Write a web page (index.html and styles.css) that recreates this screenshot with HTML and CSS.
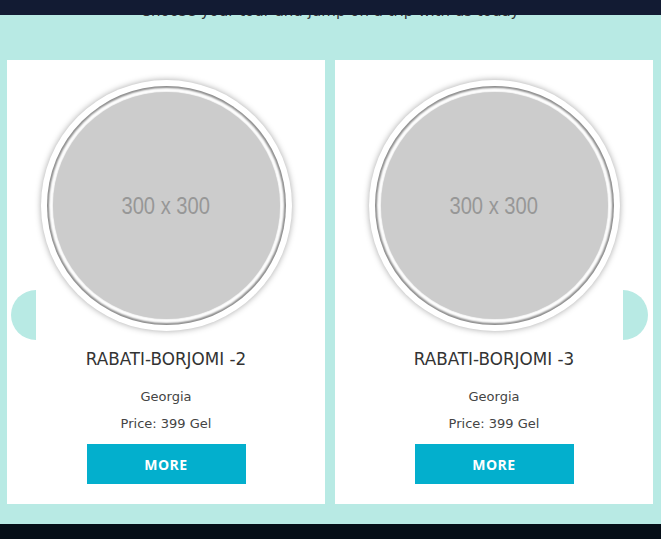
FILE: index.html
```html
<!DOCTYPE html>
<html lang="en">
<head>
  <meta charset="UTF-8" />
  <meta name="viewport" content="width=device-width,initial-scale=1" />
  <title>Tours</title>
  <link rel="stylesheet" href="styles.css">
</head>
<body>
  <!-- Top bar -->
  <header class="topbar"></header>

  <section class="tours">
    <h2 class="tours-title">Choose your tour and jump on a trip with us today</h2>

    <div class="slider">
      <span class="arrow arrow-left"></span>
      <div class="tour-card">
        <div class="thumb"><div class="thumb-ring"><div class="thumb-img"><span>300 x 300</span></div></div></div>
        <h3>RABATI-BORJOMI -2</h3>
        <div class="tour-country">Georgia</div>
        <div class="tour-price">Price: 399 Gel</div>
        <button class="more-btn">MORE</button>
      </div>
      <div class="tour-card">
        <div class="thumb"><div class="thumb-ring"><div class="thumb-img"><span>300 x 300</span></div></div></div>
        <h3>RABATI-BORJOMI -3</h3>
        <div class="tour-country">Georgia</div>
        <div class="tour-price">Price: 399 Gel</div>
        <button class="more-btn">MORE</button>
      </div>
      <span class="arrow arrow-right"></span>
    </div>
  </section>

  <footer class="bottombar"></footer>
</body>
</html>
```

FILE: styles.css
```css
body {margin:0; font-family:'DejaVu Sans', Verdana, sans-serif; background:#b8eae4; color:#333;}
.topbar {position:fixed; top:0; left:0; right:0; height:15px; background:#121b33; z-index:10;}
.tours {padding:0 8px 20px 7px;}
.tours-title {margin:0 0 38px 0; font-size:15px; line-height:22px; font-weight:400; text-align:center; color:#333;}
/* Slider */
.slider {position:relative; display:flex; gap:10px;}
.arrow {position:absolute; top:230px; width:25px; height:50px; background:#b8eae4;}
.arrow-left {left:4px; border-radius:25px 0 0 25px;}
.arrow-right {right:5px; border-radius:0 25px 25px 0;}
.tour-card {flex:1; background:#fff; height:444px; box-sizing:border-box; padding-top:20px; display:flex; flex-direction:column; align-items:center;}
.thumb {width:251px; height:251px; box-sizing:border-box; border-radius:50%; background:#fff; padding:6px; box-shadow:0 0 6px rgba(0,0,0,.35);}
.thumb-ring {height:100%; box-sizing:border-box; border-radius:50%; padding:6px; background:#fff; box-shadow:inset 0 0 2px 2px rgba(0,0,0,.45);}
.thumb-img {height:100%; border-radius:50%; background:#ccc; display:flex; align-items:center; justify-content:center;
  font-family:'Liberation Sans', Arial, sans-serif; font-size:24px; color:#979797; box-shadow:0 0 2px rgba(0,0,0,.2);}
.thumb-img span {display:inline-block; transform:scaleX(.84);}
.tour-card h3 {margin:17px 0 0 0; font-size:16.8px; line-height:22px; font-weight:400; color:#333;}
.tour-country, .tour-price {font-size:13px; line-height:27px; color:#444;}
.tour-country {margin-top:13px;}
.more-btn {margin-top:7px; width:159px; height:40px; border:none; background:#03afcd; color:#fff; font-family:'Open Sans', Arial, sans-serif;
  font-weight:700; font-size:14px; letter-spacing:.5px; cursor:pointer;}
.bottombar {height:15px; background:#050e17;}
```
